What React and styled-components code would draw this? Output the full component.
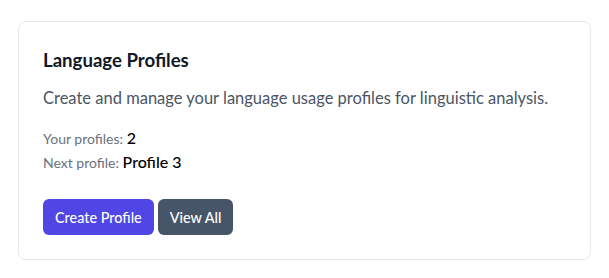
import React from 'react'
import styled, { createGlobalStyle } from 'styled-components'

const GlobalStyle = createGlobalStyle`
    body {
        margin: 0;
        background: #ffffff;
        font-family: Lato, "Noto Sans", sans-serif;
    }
`

const Page = styled.div`
    padding: 21px 18px;
`

const Card = styled.section`
    background: #ffffff;
    border: 1px solid #e5e7eb;
    border-radius: 8px;
    padding: 24px;
`

const Title = styled.h2`
    margin: 0;
    font-size: 18.6px;
    line-height: 28px;
    font-weight: 700;
    color: #111827;
`

const Description = styled.p`
    margin: 12px 0 16px;
    font-size: 16.5px;
    line-height: 24px;
    color: #4b5563;
`

const Stat = styled.div`
    font-size: 14px;
    line-height: 23px;
    color: #6b7280;
`

const StatValue = styled.span`
    font-size: 16px;
    font-weight: 500;
    color: #000000;
`

const Actions = styled.div`
    display: flex;
    gap: 4px;
    margin-top: 25px;
`

const Button = styled.button`
    height: 36px;
    padding: 0 12px;
    border: none;
    border-radius: 6px;
    font-family: inherit;
    font-size: 14.4px;
    font-weight: 500;
    color: #ffffff;
    background: ${props => props.$variant === 'secondary' ? '#475569' : '#4f46e5'};
    cursor: pointer;
`

export default function App() {
    return (
        <Page>
            <GlobalStyle />
            <Card>
                <Title>Language Profiles</Title>
                <Description>
                    Create and manage your language usage profiles for linguistic analysis.
                </Description>
                <Stat>Your profiles: <StatValue>2</StatValue></Stat>
                <Stat>Next profile: <StatValue>Profile 3</StatValue></Stat>
                <Actions>
                    <Button>Create Profile</Button>
                    <Button $variant="secondary">View All</Button>
                </Actions>
            </Card>
        </Page>
    )
}
